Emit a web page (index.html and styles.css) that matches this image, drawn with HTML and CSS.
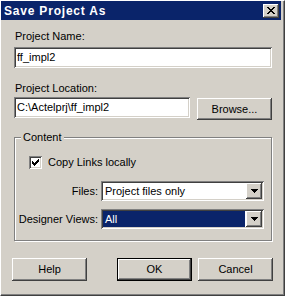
FILE: index.html
```html
<!DOCTYPE html>
<html>
<head>
<meta charset="utf-8">
<link rel="stylesheet" href="styles.css">
</head>
<body>
<div class="window">
  <div class="frame">
    <div class="titlebar">
      <span class="title">Save Project As</span>
      <div class="close raised">
        <svg width="8" height="7" viewBox="0 0 8 7" shape-rendering="crispEdges"><path d="M0 0h2v1H0zM6 0h2v1H6zM1 1h2v1H1zM5 1h2v1H5zM2 2h4v1H2zM3 3h2v1H3zM2 4h4v1H2zM1 5h2v1H1zM5 5h2v1H5zM0 6h2v1H0zM6 6h2v1H6z" fill="#000"/></svg>
      </div>
    </div>
    <div class="content">
      <div class="lbl">Project Name:</div>
      <div class="field">ff_impl2</div>
      <div class="lbl lbl-loc">Project Location:</div>
      <div class="loc-row">
        <div class="field loc">C:\Actelprj\ff_impl2</div>
        <div class="btn raised browse">Browse...</div>
      </div>
      <fieldset class="group">
        <legend>Content</legend>
        <div class="group-body">
          <div class="check-row">
            <div class="checkbox">
              <svg width="7" height="7" viewBox="0 0 7 7" shape-rendering="crispEdges"><path d="M6 0h1v1H6zM5 1h2v1H5zM0 2h1v1H0zM4 2h3v1H4zM0 3h2v1H0zM3 3h3v1H3zM0 4h5v1H0zM1 5h3v1H1zM2 6h1v1H2z" fill="#000"/></svg>
            </div>
            <span>Copy Links locally</span>
          </div>
          <div class="combo-grid">
            <span class="clbl">Files:</span>
            <div class="combo">
              <div class="combo-text">Project files only</div>
              <div class="arrow raised"><svg width="7" height="4" viewBox="0 0 7 4" shape-rendering="crispEdges"><path d="M0 0h7v1H0zM1 1h5v1H1zM2 2h3v1H2zM3 3h1v1H3z" fill="#000"/></svg></div>
            </div>
            <span class="clbl">Designer Views:</span>
            <div class="combo">
              <div class="combo-text selected">All</div>
              <div class="arrow raised"><svg width="7" height="4" viewBox="0 0 7 4" shape-rendering="crispEdges"><path d="M0 0h7v1H0zM1 1h5v1H1zM2 2h3v1H2zM3 3h1v1H3z" fill="#000"/></svg></div>
            </div>
          </div>
        </div>
      </fieldset>
      <div class="buttons">
        <div class="btn raised">Help</div>
        <div class="spacer"></div>
        <div class="btn default"><div class="raised inner">OK</div></div>
        <div class="btn raised">Cancel</div>
      </div>
    </div>
  </div>
</div>
</body>
</html>
```
FILE: styles.css
```css
* { box-sizing: border-box; }
html, body { margin: 0; padding: 0; }
body {
  background: #D4D0C8;
  font-family: "Liberation Sans", Arial, sans-serif;
  font-size: 11px;
  line-height: 13px;
  color: #000;
}
.window {
  width: 285px;
  height: 296px;
  background: #D4D0C8;
  border-top: 1px solid #fff;
  border-left: 1px solid #fff;
  border-right: 1px solid #404040;
  border-bottom: 1px solid #404040;
}
.frame {
  height: 100%;
  border-right: 1px solid #808080;
  border-bottom: 1px solid #808080;
  padding-right: 2px;
}
.raised {
  background: #D4D0C8;
  box-shadow: inset -1px -1px 0 #404040, inset 1px 1px 0 #fff, inset -2px -2px 0 #808080, inset 2px 2px 0 #D4D0C8;
}
.titlebar {
  height: 19px;
  background: #0A246A;
  display: flex;
  align-items: center;
  justify-content: space-between;
  padding: 0 2px 0 3px;
  color: #fff;
  font-weight: bold;
  font-size: 12px;
}
.title { line-height: 14px; padding-top: 1px; letter-spacing: 0.8px; }
.close {
  width: 16px;
  height: 14px;
  display: flex;
  align-items: center;
  justify-content: center;
  padding: 0 0 1px 0;
}
.close svg { display: block; }
.content {
  padding: 10px 9px 0 13px;
}
.lbl { height: 13px; margin-bottom: 4px; padding-left: 1px; }
.lbl-loc { margin-top: 14px; margin-bottom: 2px; }
.field {
  height: 21px;
  background: #fff;
  box-shadow: inset 1px 1px 0 #808080, inset -1px -1px 0 #fff, inset 2px 2px 0 #404040, inset -2px -2px 0 #D4D0C8;
  padding: 0 3px;
  display: flex;
  align-items: center;
  white-space: nowrap;
}
.loc-row { display: flex; gap: 7px; }
.loc { flex: 1; }
.btn {
  width: 75px;
  height: 23px;
  display: flex;
  align-items: center;
  justify-content: center;
}
.browse { height: 22px; margin-top: 1px; }
.group {
  margin: 11px 0 0 0;
  padding: 0;
  min-width: 0;
  border: 1px solid #808080;
  box-shadow: 1px 1px 0 #fff, inset 1px 1px 0 #fff;
  width: 258px;
}
.group legend {
  margin-left: 6px;
  padding: 0 2px;
  background: #D4D0C8;
  line-height: 13px;
}
.group-body { padding: 12px 7px 11px 0; }
.check-row {
  display: flex;
  align-items: center;
  margin-left: 14px;
  height: 13px;
}
.checkbox {
  width: 13px;
  height: 13px;
  background: #fff;
  box-shadow: inset 1px 1px 0 #808080, inset -1px -1px 0 #fff, inset 2px 2px 0 #404040, inset -2px -2px 0 #D4D0C8;
  padding: 3px;
  margin-right: 6px;
}
.checkbox svg { display: block; }
.combo-grid {
  margin-top: 12px;
  display: grid;
  grid-template-columns: 83px 1fr;
  column-gap: 3px;
  row-gap: 8px;
  align-items: center;
}
.clbl { text-align: right; }
.combo {
  height: 20px;
  background: #fff;
  box-shadow: inset 1px 1px 0 #808080, inset -1px -1px 0 #fff, inset 2px 2px 0 #404040, inset -2px -2px 0 #D4D0C8;
  padding: 2px;
  display: flex;
}
.combo-text {
  flex: 1;
  padding: 0 2px;
  display: flex;
  align-items: center;
  margin-right: 1px;
}
.combo-text.selected { background: #0A246A; color: #fff; }
.arrow {
  width: 16px;
  display: flex;
  align-items: center;
  justify-content: center;
}
.arrow svg { display: block; }
.buttons {
  display: flex;
  margin: 17px -1px 0 -2px;
  gap: 6px;
}
.spacer { flex: 1; }
.default { border: 1px solid #000; }
.default .inner {
  width: 100%;
  height: 100%;
  display: flex;
  align-items: center;
  justify-content: center;
}
```
